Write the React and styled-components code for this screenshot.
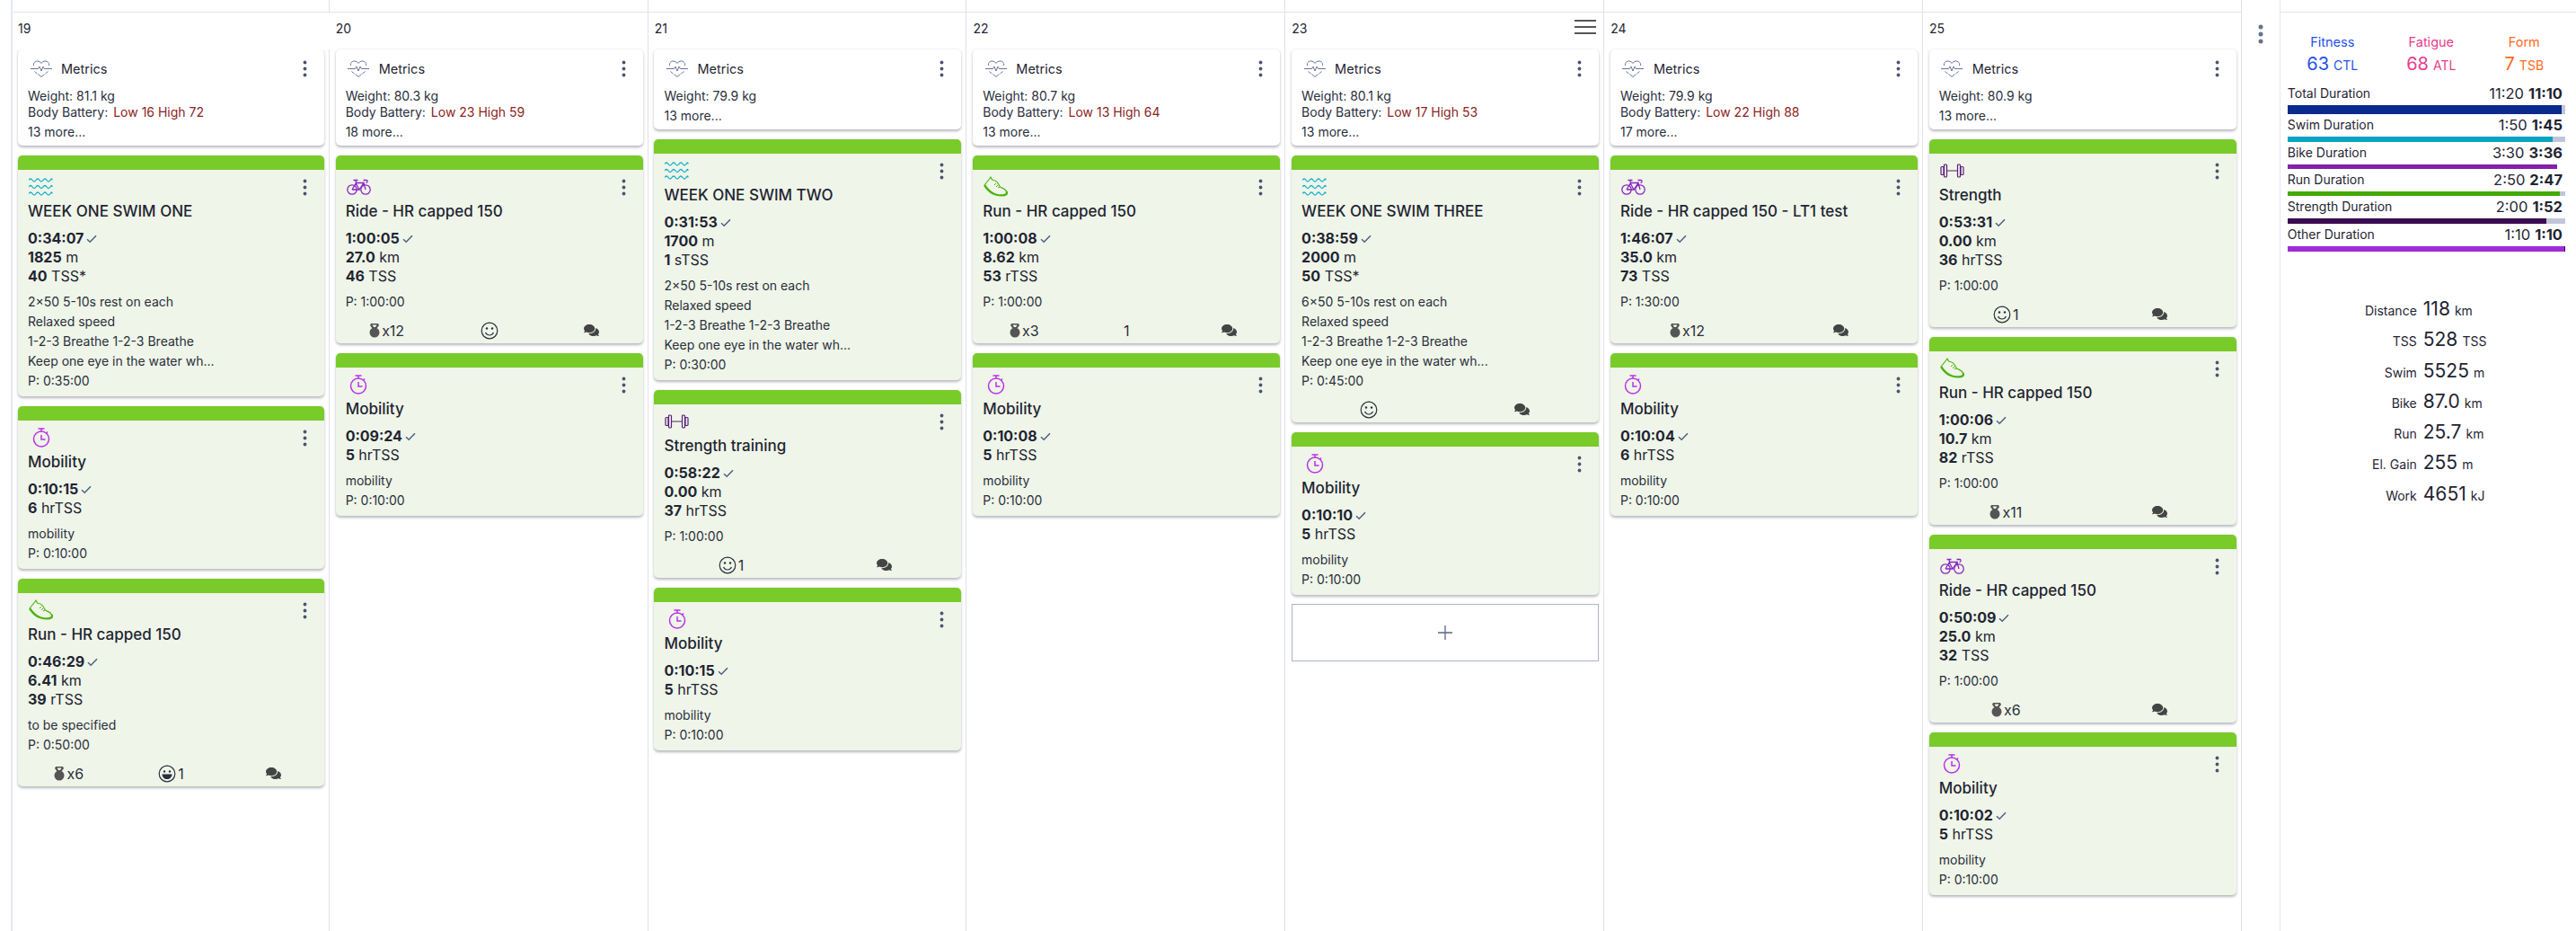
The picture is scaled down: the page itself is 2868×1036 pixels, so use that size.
import React from "react";
import styled, { createGlobalStyle } from "styled-components";
import { FaComments } from "react-icons/fa";

const Global = createGlobalStyle`
  html, body { margin: 0; padding: 0; background: #fff; }
  body { font-family: Inter, "Liberation Sans", sans-serif; color: #1f2533; overflow: hidden; }
`;

const Page = styled.div`
  display: grid;
  grid-template-columns: repeat(7, 354.83px) 43px 1fr;
  height: 1036px;
  padding-left: 12px;
  border-left: 0;
  box-sizing: border-box;
`;

const Column = styled.section`
  display: flex;
  flex-direction: column;
  border-right: 1px solid #dfe2ec;
  border-left: ${(p) => (p.$first ? "2px solid #e6e8f3" : "0")};
  box-sizing: border-box;
  min-width: 0;
`;

const TopStrip = styled.div`
  height: 14px;
  flex: none;
  border-bottom: 1px solid #e2e4ea;
  box-sizing: border-box;
`;

const DayHead = styled.header`
  height: 41px;
  flex: none;
  box-sizing: border-box;
  padding: 9px 8px 0 ${(p) => (p.$first ? "6px" : "7px")};
  display: flex;
  justify-content: space-between;
  align-items: flex-start;
  font-size: 14px;
  line-height: 18px;
  background: #fff;
  margin-right: ${(p) => (p.$mask ? "-1px" : "0")};
  position: ${(p) => (p.$mask ? "relative" : "static")};
`;

const Burger = styled.div`
  width: 24px;
  height: 16px;
  margin: -1px 0 0;
  display: flex;
  flex-direction: column;
  justify-content: space-between;
  & > i { display: block; height: 2px; background: #555; }
`;

const Stack = styled.div`
  display: flex;
  flex-direction: column;
  gap: 11px;
  padding: 0 5px 0 ${(p) => (p.$first ? "6px" : "6.8px")};
`;

const Card = styled.article`
  background: ${(p) => (p.$metric ? "#fff" : "#eff5e8")};
  border-radius: 5px;
  box-shadow: 0 1.5px 3px rgba(30, 35, 60, 0.32);
  overflow: hidden;
  font-size: 14px;
`;

const Bar = styled.div`
  height: 16px;
  background: #79cb2a;
`;

const IconRow = styled.div`
  height: 33px;
  display: flex;
  align-items: center;
  justify-content: space-between;
  padding: 5px 19px 0 12px;
  box-sizing: border-box;
`;

const IconBox = styled.span`
  width: 27px;
  height: 24px;
  display: flex;
  align-items: center;
  justify-content: center;
`;

const Dots = styled.svg`
  width: 5px;
  height: 19px;
  flex: none;
`;

const Title = styled.h3`
  margin: 0;
  padding: 0 11px;
  font-size: 17px;
  line-height: 26px;
  font-weight: 500;
  color: #1f2533;
  white-space: nowrap;
`;

const Stats = styled.div`
  margin-top: 7px;
  padding: 0 11px;
  font-size: 16px;
  line-height: 21px;
`;

const StatLine = styled.div`
  display: flex;
  align-items: center;
  gap: 3px;
  & b { font-weight: 700; }
`;

const Notes = styled.div`
  margin-top: 7px;
  padding: 0 11px 6px;
  font-size: 14px;
  line-height: 22px;
  color: #2a2f3c;
  white-space: nowrap;
`;

const Footer = styled.div`
  height: 29px;
  display: grid;
  grid-template-columns: repeat(${(p) => p.$count}, 1fr);
  align-items: center;
  justify-items: center;
  font-size: 16px;
  color: #333;
`;

const FooterItem = styled.span`
  display: inline-flex;
  align-items: center;
  gap: 2px;
  color: ${(p) => p.$color || "#2a2f3c"};
  line-height: 20px;
`;

const MetricHead = styled.div`
  height: 43px;
  display: flex;
  align-items: center;
  padding: 0 19px 0 12px;
`;

const MetricName = styled.span`
  margin-left: 9px;
  flex: 1;
  font-size: 14.5px;
`;

const MetricBody = styled.div`
  padding: 0 11px 4px;
  font-size: 14px;
  line-height: 18px;
  color: #2a2f3c;
`;

const Red = styled.span`
  color: #8c2323;
  margin-left: 2px;
`;

const More = styled.div`
  margin-top: 2px;
  line-height: 22px;
`;

const AddBox = styled.div`
  height: 64px;
  margin-top: -1px;
  box-sizing: border-box;
  border: 1px solid #a9b3cd;
  display: flex;
  align-items: center;
  justify-content: center;
`;

const Gutter = styled.div`
  padding: 27px 0 0 18.5px;
  border-right: 1px solid #e6e8f3;
`;

const Summary = styled.aside`
  display: flex;
  flex-direction: column;
  min-width: 0;
`;

const SummaryBody = styled.div`
  padding: 0 12px 0 8px;
`;

const Fit = styled.div`
  display: grid;
  grid-template-columns: 100px 120px 87px;
  margin-top: 23px;
  text-align: center;
`;

const FitCell = styled.div`
  color: ${(p) => p.$color};
  font-size: 14.5px;
  line-height: 20px;
`;

const FitValue = styled.div`
  line-height: 28px;
  font-size: 14px;
  & b { font-size: 20px; font-weight: 400; margin-right: 5px; }
`;

const DurationList = styled.div`
  margin-top: 7px;
  display: flex;
  flex-direction: column;
  gap: 2px;
`;

const DurationText = styled.div`
  display: flex;
  justify-content: space-between;
  height: 20px;
  line-height: 20px;
  font-size: 14px;
  padding-right: 3px;
`;

const DurationValue = styled.span`
  font-size: 16.5px;
  & b { font-weight: 700; margin-left: 5px; }
`;

const Track = styled.div`
  margin-top: 3px;
  height: ${(p) => p.$h}px;
  background: ${(p) => p.$bg};
`;

const Fill = styled.div`
  height: 100%;
  background: ${(p) => p.$color};
`;

const Totals = styled.div`
  margin-top: 51px;
  display: grid;
  grid-template-columns: 144px 1fr;
  column-gap: 7px;
  grid-auto-rows: 34.3px;
  align-items: baseline;
`;

const TotalLabel = styled.span`
  text-align: right;
  font-size: 14px;
`;

const TotalValue = styled.span`
  font-size: 14px;
  white-space: nowrap;
  & b { font-size: 21px; font-weight: 400; margin-right: 5px; }
`;

const Check = () => (
  <svg width="12" height="10" viewBox="0 0 12 10" fill="none" stroke="#4d6183" strokeWidth="1.5">
    <path d="M1 5.2l3.2 3L11 1.2" />
  </svg>
);

const Heart = () => (
  <svg width="24" height="19" viewBox="0 0 24 19" fill="none" stroke="#66759a" strokeWidth="1">
    <path d="M3.5 6C2.6 2.4 6.2 .2 9 1.2c1.3.5 2.2 1.3 3 2.2.8-.9 1.7-1.7 3-2.2 2.8-1 6.4 1.2 5.5 4.8" />
    <path d="M0 9.5h8.5l1.5-2.5 2 5 2-5 1.5 2.500H24" />
    <path d="M4.500 12.500l3 2.500M19.500 12.500l-3 2.500M8.500 15.500l3.500 3 3.500-3" />
  </svg>
);

const wave = (y) =>
  `M0 ${y}q2-3 4 0t4 0 4 0 4 0 4 0 4 0 2 0`;
const Waves = () => (
  <svg width="27" height="20" viewBox="0 0 27 20" fill="none" stroke="#16aecd" strokeWidth="1.3">
    <path d={wave(2.500)} />
    <path d={wave(10)} />
    <path d={wave(17.500)} />
  </svg>
);

const Stopwatch = () => (
  <svg width="20" height="22" viewBox="0 0 20 22" fill="none" stroke="#b932e8" strokeWidth="1.5">
    <circle cx="10" cy="12.500" r="8.500" />
    <path d="M6.500 1h7M10 1v3M10 8v5h4.500M17 4.500l-1.500 1.500" />
  </svg>
);

const Bike = () => (
  <svg width="27" height="18" viewBox="0 0 27 18" fill="none" stroke="#8a25c2" strokeWidth="1.3">
    <circle cx="6" cy="12" r="5.200" />
    <circle cx="21" cy="12" r="5.200" />
    <path d="M6 12l4.500-7.500H19M10 4.500l4 7.500h-8M14 12l5-7.500 2 7.500M7.500 1.500h5M10 1.500l.5 3M18.500 1.500h3.500c1.500 0 1.500 3-.5 3" />
  </svg>
);

const Shoe = () => (
  <svg width="27" height="24" viewBox="0 0 27 24" fill="none" stroke="#4cb30f" strokeWidth="1.2" strokeLinejoin="round">
    <path d="M1 10L7 2.500 8 1l1.500 3c2.500.5 4.500 1 6 3l3 5c2.500 1.500 6 2 7 5" />
    <path d="M1 10c3 4.500 7 9 12.500 10.500 4 1 9.500 1.500 12-.5.800-1 .5-2 0-3" strokeWidth="2.300" />
    <path d="M14 8l-2 2M16 10l-2 2M18 12l-2 1" strokeWidth="1" />
  </svg>
);

const Dumbbell = () => (
  <svg width="27" height="16" viewBox="0 0 27 16" fill="none" stroke="#5b1c7c" strokeWidth="1.200">
    <rect x="1" y="3.500" width="3" height="9" rx="1" />
    <rect x="4.500" y="1" width="3" height="14" rx="1" />
    <rect x="19.500" y="1" width="3" height="14" rx="1" />
    <rect x="23" y="3.500" width="3" height="9" rx="1" />
    <path d="M7.500 8h12" />
  </svg>
);

const ICONS = { swim: Waves, mobility: Stopwatch, bike: Bike, run: Shoe, strength: Dumbbell };

const MenuDots = () => (
  <Dots viewBox="0 0 5 19" fill="#4d5573">
    <circle cx="2.500" cy="2.500" r="1.900" />
    <circle cx="2.500" cy="9.500" r="1.900" />
    <circle cx="2.500" cy="16.500" r="1.900" />
  </Dots>
);

const Kettle = () => (
  <svg width="12" height="17" viewBox="0 0 12 17" fill="#555">
    <circle cx="6" cy="11" r="5.500" />
    <path d="M2 1h8l1 2-2.500 3.500h-5L1 3zM3.500 2.500l1.500 2.500h2l1.500-2.500z" fillRule="evenodd" />
  </svg>
);

const Face = ({ laugh }) => (
  <svg width="20" height="20" viewBox="0 0 20 20" fill="none" stroke="#2a2f3c" strokeWidth="1.200">
    <circle cx="10" cy="10" r="8.800" />
    <circle cx="7" cy="7.500" r="1.200" fill="#2a2f3c" stroke="none" />
    <circle cx="13" cy="7.500" r="1.200" fill="#2a2f3c" stroke="none" />
    {laugh ? (
      <path d="M4.500 10.500h11c0 3.500-2.500 5.500-5.500 5.500s-5.500-2-5.500-5.500z" fill="#2a2f3c" stroke="none" />
    ) : (
      <path d="M5.500 12c1 2 2.700 3 4.500 3s3.500-1 4.500-3" />
    )}
  </svg>
);

const Plus = () => (
  <svg width="16" height="16" viewBox="0 0 16 16" stroke="#5a6688" strokeWidth="1.300">
    <path d="M8 0v16M0 8h16" />
  </svg>
);

const ActivityFooter = ({ items }) => (
  <Footer $count={items.length}>
    {items.map((it, i) => {
      if (it === "c")
        return (
          <FooterItem key={i} $color="#444">
            <FaComments size={17} />
          </FooterItem>
        );
      if (it[0] === "x")
        return (
          <FooterItem key={i}>
            <Kettle />
            {it}
          </FooterItem>
        );
      if (it === "s" || it === "s1" || it === "l1")
        return (
          <FooterItem key={i}>
            <Face laugh={it === "l1"} />
            {it.length > 1 ? "1" : ""}
          </FooterItem>
        );
      return <FooterItem key={i}>{it}</FooterItem>;
    })}
  </Footer>
);

const Activity = ({ a }) => {
  const Icon = ICONS[a.type];
  return (
    <Card>
      <Bar />
      <IconRow>
        <IconBox>
          <Icon />
        </IconBox>
        <MenuDots />
      </IconRow>
      <Title>{a.title}</Title>
      <Stats>
        {a.stats.map((s, i) => (
          <StatLine key={i}>
            <span>
              <b>{s[0]}</b>
              {s[1] ? " " + s[1] : ""}
            </span>
            {i === 0 && <Check />}
          </StatLine>
        ))}
      </Stats>
      <Notes>
        {(a.notes || []).map((n, i) => (
          <div key={i}>{n}</div>
        ))}
        <div>P: {a.plan}</div>
      </Notes>
      {a.footer && <ActivityFooter items={a.footer} />}
    </Card>
  );
};

const Metrics = ({ m }) => (
  <Card $metric>
    <MetricHead>
      <IconBox>
        <Heart />
      </IconBox>
      <MetricName>Metrics</MetricName>
      <MenuDots />
    </MetricHead>
    <MetricBody>
      <div>Weight: {m.weight} kg</div>
      {m.battery && (
        <div>
          Body Battery: <Red>{m.battery}</Red>
        </div>
      )}
      <More>{m.more} more...</More>
    </MetricBody>
  </Card>
);

const desc1 = ["2×50 5-10s rest on each", "Relaxed speed", "1-2-3 Breathe 1-2-3 Breathe", "Keep one eye in the water wh..."];
const desc3 = ["6×50 5-10s rest on each", "Relaxed speed", "1-2-3 Breathe 1-2-3 Breathe", "Keep one eye in the water wh..."];
const mob = (d, t) => ({ type: "mobility", title: "Mobility", stats: [[d], [t, "hrTSS"]], notes: ["mobility"], plan: "0:10:00" });

const DAYS = [
  {
    n: 19,
    m: { weight: "81.1", battery: "Low 16 High 72", more: 13 },
    items: [
      { type: "swim", title: "WEEK ONE SWIM ONE", stats: [["0:34:07"], ["1825", "m"], ["40", "TSS*"]], notes: desc1, plan: "0:35:00" },
      mob("0:10:15", "6"),
      { type: "run", title: "Run - HR capped 150", stats: [["0:46:29"], ["6.41", "km"], ["39", "rTSS"]], notes: ["to be specified"], plan: "0:50:00", footer: ["x6", "l1", "c"] },
    ],
  },
  {
    n: 20,
    m: { weight: "80.3", battery: "Low 23 High 59", more: 18 },
    items: [
      { type: "bike", title: "Ride - HR capped 150", stats: [["1:00:05"], ["27.0", "km"], ["46", "TSS"]], plan: "1:00:00", footer: ["x12", "s", "c"] },
      mob("0:09:24", "5"),
    ],
  },
  {
    n: 21,
    m: { weight: "79.9", more: 13 },
    items: [
      { type: "swim", title: "WEEK ONE SWIM TWO", stats: [["0:31:53"], ["1700", "m"], ["1", "sTSS"]], notes: desc1, plan: "0:30:00" },
      { type: "strength", title: "Strength training", stats: [["0:58:22"], ["0.00", "km"], ["37", "hrTSS"]], plan: "1:00:00", footer: ["s1", "c"] },
      mob("0:10:15", "5"),
    ],
  },
  {
    n: 22,
    m: { weight: "80.7", battery: "Low 13 High 64", more: 13 },
    items: [
      { type: "run", title: "Run - HR capped 150", stats: [["1:00:08"], ["8.62", "km"], ["53", "rTSS"]], plan: "1:00:00", footer: ["x3", "1", "c"] },
      mob("0:10:08", "5"),
    ],
  },
  {
    n: 23,
    burger: true,
    add: true,
    m: { weight: "80.1", battery: "Low 17 High 53", more: 13 },
    items: [
      { type: "swim", title: "WEEK ONE SWIM THREE", stats: [["0:38:59"], ["2000", "m"], ["50", "TSS*"]], notes: desc3, plan: "0:45:00", footer: ["s", "c"] },
      mob("0:10:10", "5"),
    ],
  },
  {
    n: 24,
    m: { weight: "79.9", battery: "Low 22 High 88", more: 17 },
    items: [
      { type: "bike", title: "Ride - HR capped 150 - LT1 test", stats: [["1:46:07"], ["35.0", "km"], ["73", "TSS"]], plan: "1:30:00", footer: ["x12", "c"] },
      mob("0:10:04", "6"),
    ],
  },
  {
    n: 25,
    m: { weight: "80.9", more: 13 },
    items: [
      { type: "strength", title: "Strength", stats: [["0:53:31"], ["0.00", "km"], ["36", "hrTSS"]], plan: "1:00:00", footer: ["s1", "c"] },
      { type: "run", title: "Run - HR capped 150", stats: [["1:00:06"], ["10.7", "km"], ["82", "rTSS"]], plan: "1:00:00", footer: ["x11", "c"] },
      { type: "bike", title: "Ride - HR capped 150", stats: [["0:50:09"], ["25.0", "km"], ["32", "TSS"]], plan: "1:00:00", footer: ["x6", "c"] },
      mob("0:10:02", "5"),
    ],
  },
];

const FITNESS = [
  { label: "Fitness", value: 63, unit: "CTL", color: "#2450ec" },
  { label: "Fatigue", value: 68, unit: "ATL", color: "#e93a8b" },
  { label: "Form", value: 7, unit: "TSB", color: "#fb6a18" },
];

const DURATIONS = [
  { label: "Total Duration", plan: "11:20", done: "11:10", color: "#0b2a8e", pct: 98.7, h: 10, bg: "#c0c6d8" },
  { label: "Swim Duration", plan: "1:50", done: "1:45", color: "#09a4c1", pct: 95.4, h: 6, bg: "#c0c6d8" },
  { label: "Bike Duration", plan: "3:30", done: "3:36", color: "#8420a8", pct: 97.1, h: 5, bg: "#fff" },
  { label: "Run Duration", plan: "2:50", done: "2:47", color: "#45a907", pct: 98, h: 5, bg: "#c0c6d8" },
  { label: "Strength Duration", plan: "2:00", done: "1:52", color: "#3a0b50", pct: 93.2, h: 6, bg: "#c0c6d8" },
  { label: "Other Duration", plan: "1:10", done: "1:10", color: "#a02bd6", pct: 99.7, h: 6, bg: "#3a0b50" },
];

const TOTALS = [
  ["Distance", "118", "km"],
  ["TSS", "528", "TSS"],
  ["Swim", "5525", "m"],
  ["Bike", "87.0", "km"],
  ["Run", "25.7", "km"],
  ["El. Gain", "255", "m"],
  ["Work", "4651", "kJ"],
];

export default function App() {
  return (
    <>
      <Global />
      <Page>
        {DAYS.map((d, i) => (
          <Column key={d.n} $first={i === 0}>
            <TopStrip />
            <DayHead $first={i === 0} $mask={i === 0}>
              <span>{d.n}</span>
              {d.burger && (
                <Burger>
                  <i />
                  <i />
                  <i />
                </Burger>
              )}
            </DayHead>
            <Stack $first={i === 0}>
              <Metrics m={d.m} />
              {d.items.map((a, j) => (
                <Activity key={j} a={a} />
              ))}
              {d.add && (
                <AddBox>
                  <Plus />
                </AddBox>
              )}
            </Stack>
          </Column>
        ))}
        <Gutter>
          <svg width="6" height="22" viewBox="0 0 6 22" fill="#64748b">
            <circle cx="3" cy="3" r="2.500" />
            <circle cx="3" cy="11" r="2.500" />
            <circle cx="3" cy="19" r="2.500" />
          </svg>
        </Gutter>
        <Summary>
          <TopStrip />
          <SummaryBody>
            <Fit>
              {FITNESS.map((f) => (
                <FitCell key={f.label} $color={f.color}>
                  <div>{f.label}</div>
                  <FitValue>
                    <b>{f.value}</b>
                    {f.unit}
                  </FitValue>
                </FitCell>
              ))}
            </Fit>
            <DurationList>
              {DURATIONS.map((r) => (
                <div key={r.label}>
                  <DurationText>
                    <span>{r.label}</span>
                    <DurationValue>
                      {r.plan}
                      <b>{r.done}</b>
                    </DurationValue>
                  </DurationText>
                  <Track $h={r.h} $bg={r.bg}>
                    <Fill $color={r.color} style={{ width: `${r.pct}%` }} />
                  </Track>
                </div>
              ))}
            </DurationList>
            <Totals>
              {TOTALS.map(([l, v, u]) => (
                <React.Fragment key={l}>
                  <TotalLabel>{l}</TotalLabel>
                  <TotalValue>
                    <b>{v}</b>
                    {u}
                  </TotalValue>
                </React.Fragment>
              ))}
            </Totals>
          </SummaryBody>
        </Summary>
      </Page>
    </>
  );
}
